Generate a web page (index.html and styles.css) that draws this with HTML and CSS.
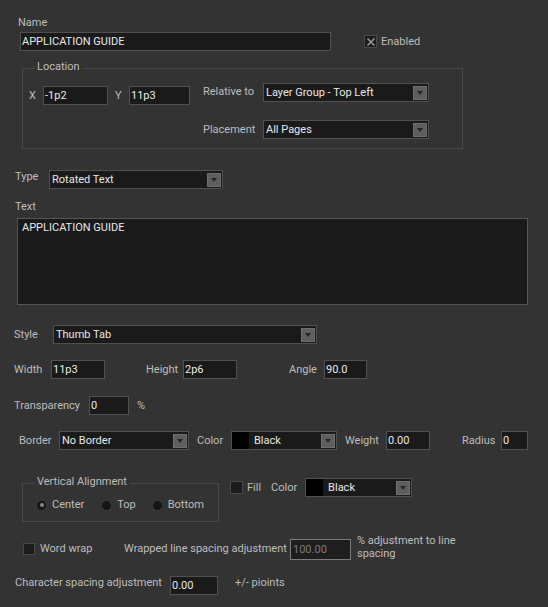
FILE: index.html
```html
<!DOCTYPE html>
<html lang="en">
<head>
    <meta charset="UTF-8">
    <title>Thumb Tab Properties</title>
    <link rel="stylesheet" href="styles.css">
</head>
<body>
<div class="dialog">

    <!-- Name -->
    <div class="label name-label">Name</div>
    <div class="row name-row">
        <div class="field name-field">APPLICATION GUIDE</div>
        <div class="check enabled-check">
            <span class="box"><svg width="10" height="10" viewBox="0 0 10 10"><path d="M1.5 1.5 L8.5 8.5 M8.5 1.5 L1.5 8.5" stroke="#9a9a9a" stroke-width="1.5"/></svg></span>
            <span class="label">Enabled</span>
        </div>
    </div>

    <!-- Location group -->
    <fieldset class="group location">
        <legend>Location</legend>
        <div class="row loc-row">
            <div class="row xy">
                <span class="label x-label">X</span>
                <div class="field x-field">-1p2</div>
                <span class="label y-label">Y</span>
                <div class="field y-field">11p3</div>
            </div>
            <span class="label rel-label">Relative to</span>
            <div class="field select rel-select">Layer Group - Top Left<span class="arrow"></span></div>
        </div>
        <div class="row loc-row2">
            <span class="label rel-label">Placement</span>
            <div class="field select rel-select">All Pages<span class="arrow"></span></div>
        </div>
    </fieldset>

    <!-- Type -->
    <div class="row type-row">
        <span class="label type-label">Type</span>
        <div class="field select type-select">Rotated Text<span class="arrow"></span></div>
    </div>

    <!-- Text -->
    <div class="label text-label">Text</div>
    <div class="field text-area">APPLICATION GUIDE</div>

    <!-- Style -->
    <div class="row style-row">
        <span class="label style-label">Style</span>
        <div class="field select style-select">Thumb Tab<span class="arrow"></span></div>
    </div>

    <!-- Size -->
    <div class="row size-row">
        <span class="label w-label">Width</span>
        <div class="field w-field">11p3</div>
        <span class="label h-label">Height</span>
        <div class="field h-field">2p6</div>
        <span class="label a-label">Angle</span>
        <div class="field a-field">90.0</div>
    </div>

    <div class="row trans-row">
        <span class="label t-label">Transparency</span>
        <div class="field t-field">0</div>
        <span class="label pct">%</span>
    </div>

    <!-- Border -->
    <div class="row border-row">
        <span class="label b-label">Border</span>
        <div class="field select b-select">No Border<span class="arrow"></span></div>
        <span class="label c-label">Color</span>
        <div class="field select color-select"><span class="swatch"></span>Black<span class="arrow"></span></div>
        <span class="label wt-label">Weight</span>
        <div class="field wt-field">0.00</div>
        <span class="label r-label">Radius</span>
        <div class="field r-field">0</div>
    </div>

    <!-- Alignment and fill -->
    <div class="row align-row">
        <fieldset class="group valign">
            <legend>Vertical Alignment</legend>
            <div class="row radios">
                <span class="radio on"></span><span class="label">Center</span>
                <span class="radio top"></span><span class="label">Top</span>
                <span class="radio bottom"></span><span class="label">Bottom</span>
            </div>
        </fieldset>
        <div class="row fill">
            <span class="box fill-box"></span>
            <span class="label fill-label">Fill</span>
            <span class="label fc-label">Color</span>
            <div class="field select fill-select"><span class="swatch"></span>Black<span class="arrow"></span></div>
        </div>
    </div>

    <!-- Wrap -->
    <div class="row wrap-row">
        <span class="box wrap-box"></span>
        <span class="label ww-label">Word wrap</span>
        <span class="label wl-label">Wrapped line spacing adjustment</span>
        <div class="field wl-field disabled">100.00</div>
        <span class="label wl-note">% adjustment to line<br>spacing</span>
    </div>

    <div class="row char-row">
        <span class="label cs-label">Character spacing adjustment</span>
        <div class="field cs-field">0.00</div>
        <span class="label cs-note">+/- pioints</span>
    </div>

</div>
</body>
</html>
```

FILE: styles.css
```css
/* General */
* {
    margin: 0;
    padding: 0;
    box-sizing: border-box;
}

body {
    background-color: #333333;
    font-family: Roboto, "Liberation Sans", sans-serif;
    font-size: 11px;
    color: #bdbdbd;
}

.dialog {
    width: 548px;
    height: 607px;
    padding-top: 16px;
}

.row {
    display: flex;
    align-items: center;
}

.label {
    line-height: 14px;
    white-space: nowrap;
}

/* Inputs */
.field {
    height: 19px;
    line-height: 17px;
    background-color: #1a1a1a;
    border: 1px solid #505050;
    color: #e8e8e8;
    padding-left: 1px;
    white-space: nowrap;
    position: relative;
}

.select {
    padding-left: 2px;
}

.select .arrow {
    position: absolute;
    top: 2px;
    right: 1px;
    width: 14px;
    height: 14px;
    background-color: #5e5e5e;
    border: 1px solid #6e6e6e;
}

.select .arrow::after {
    content: "";
    position: absolute;
    left: 3px;
    top: 4px;
    border-left: 3.5px solid transparent;
    border-right: 3.5px solid transparent;
    border-top: 4px solid #262626;
}

.swatch {
    display: inline-block;
    width: 17px;
    height: 17px;
    background-color: #000;
    vertical-align: top;
    margin-left: -2px;
    margin-right: 5px;
}

.box {
    display: inline-flex;
    align-items: center;
    justify-content: center;
    width: 12px;
    height: 12px;
    background-color: #1c1c1c;
    border: 1px solid #4a4a4a;
}

/* Group boxes */
.group {
    border: 1px solid #4a4a4a;
    padding: 0;
}

.group legend {
    margin-left: 11px;
    padding: 0 3px 2px;
    line-height: 14px;
    color: #bdbdbd;
}

/* Name */
.name-label { margin-left: 18px; }
.name-row { margin-top: 2px; }
.name-field { margin-left: 20px; width: 311px; }
.enabled-check { display: flex; align-items: center; margin-left: 33px; }
.enabled-check .box { margin-right: 4px; width: 13px; height: 13px; }

/* Location */
.location {
    margin: 9px 0 0 22px;
    width: 441px;
    height: 89px;
}

.loc-row {
    margin-top: 7px;
    align-items: flex-start;
}

.xy { margin-top: 3px; }
.x-label { margin-left: 6px; width: 14px; }
.x-field { width: 65px; }
.y-label { margin-left: 7px; width: 14px; }
.y-field { width: 61px; }
.rel-label { width: 60px; margin-top: 2px; }
.loc-row .rel-label { margin-left: 13px; }
.rel-select { width: 166px; }
.loc-row2 { margin: 15px 0 0 180px; }
.loc-row2 .rel-label { margin-top: 0; }

/* Type and text */
.type-row { margin-top: 21px; }
.type-label { margin-left: 15px; width: 34px; margin-top: -5px; }
.type-select { width: 174px; }

.text-label { margin: 11px 0 0 15px; }
.text-area {
    margin: 4px 0 0 17px;
    width: 511px;
    height: 87px;
    padding: 2px 4px;
    line-height: 14px;
    border-color: #555;
}

/* Style and size */
.style-row { margin-top: 20px; }
.style-label { margin-left: 14px; width: 39px; }
.style-select { width: 264px; }

.size-row { margin-top: 16px; }
.w-label { margin-left: 14px; width: 37px; }
.w-field { width: 54px; }
.h-label { margin-left: 41px; width: 37px; }
.h-field { width: 54px; }
.a-label { margin-left: 52px; width: 35px; }
.a-field { width: 43px; }

.trans-row { margin-top: 17px; }
.t-label { margin-left: 14px; width: 75px; }
.t-field { width: 40px; }
.pct { margin-left: 8px; }

/* Border */
.border-row { margin-top: 16px; }
.b-label { margin-left: 19px; width: 40px; }
.b-select { width: 130px; }
.c-label { margin-left: 8px; width: 34px; }
.color-select { width: 106px; }
.wt-label { margin-left: 8px; width: 41px; }
.wt-field { width: 44px; }
.r-label { margin-left: 32px; width: 39px; }
.r-field { width: 27px; }

/* Alignment */
.align-row {
    margin-top: 25px;
    align-items: flex-start;
}

.valign {
    margin-left: 22px;
    width: 197px;
    height: 47px;
}

.radios { margin: 7px 0 0 13px; }

.radio {
    width: 11px;
    height: 11px;
    border-radius: 50%;
    background-color: #151515;
    border: 1px solid #3c3c3c;
    margin-right: 5px;
    position: relative;
}

.radio.on::after {
    content: "";
    position: absolute;
    left: 2.5px;
    top: 2.5px;
    width: 4px;
    height: 4px;
    border-radius: 50%;
    background-color: #8a8a8a;
}

.radio.top { margin-left: 17px; }
.radio.bottom { margin-left: 16px; }

.fill { margin: 3px 0 0 11px; }
.fill-box { width: 13px; height: 13px; margin-top: -1px; }
.fill-label { margin-left: 4px; }
.fc-label { margin-left: 10px; width: 34px; }
.fill-select { width: 107px; }

/* Wrap */
.wrap-row { margin-top: 16px; }
.wrap-box { margin-left: 23px; }
.ww-label { margin-left: 5px; width: 84px; }
.wl-label { width: 166px; }
.wl-field { width: 61px; height: 21px; line-height: 19px; padding-left: 2px; }
.disabled { color: #7a7a7a; border-color: #7c7c7c; background-color: #1e1e1e; }
.wl-note { margin-left: 6px; line-height: 13px; white-space: normal; margin-top: -4px; }

.char-row { margin-top: 16px; }
.cs-label { margin-left: 15px; width: 155px; margin-top: -6px; }
.cs-field { width: 48px; }
.cs-note { margin-left: 17px; margin-top: -6px; }
```
